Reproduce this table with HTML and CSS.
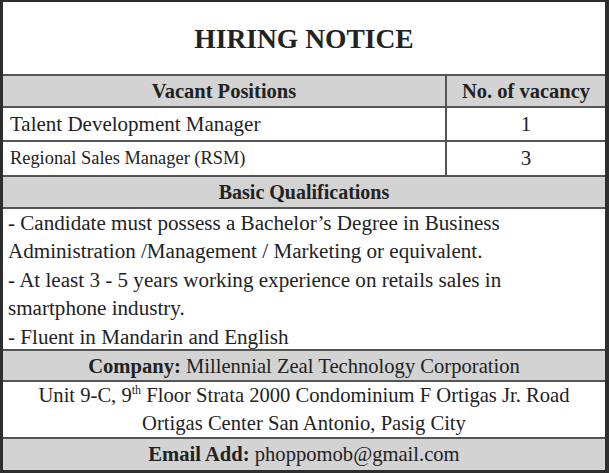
FILE: index.html
```html
<!DOCTYPE html>
<html lang="en">
<head>
<meta charset="utf-8">
<title>Hiring Notice</title>
<link rel="stylesheet" href="styles.css">
</head>
<body>
<div class="notice">
  <div class="row title">HIRING NOTICE</div>
  <div class="row split head shade">
    <div class="cell c1 bold">Vacant Positions</div>
    <div class="cell c2 bold">No. of vacancy</div>
  </div>
  <div class="row split r1">
    <div class="cell c1 left">Talent Development Manager</div>
    <div class="cell c2">1</div>
  </div>
  <div class="row split r2">
    <div class="cell c1 left small">Regional Sales Manager (RSM)</div>
    <div class="cell c2">3</div>
  </div>
  <div class="row qhead shade bold">Basic Qualifications</div>
  <div class="row quals">
    <p>- Candidate must possess a Bachelor’s Degree in Business</p>
    <p>Administration /Management / Marketing or equivalent.</p>
    <p>- At least 3 - 5 years working experience on retails sales in</p>
    <p>smartphone industry.</p>
    <p>- Fluent in Mandarin and English</p>
  </div>
  <div class="row company shade"><span class="bold">Company:</span>&nbsp;Millennial Zeal Technology Corporation</div>
  <div class="row address">
    <p>Unit 9-C, 9<sup>th</sup> Floor Strata 2000 Condominium F Ortigas Jr. Road</p>
    <p>Ortigas Center San Antonio, Pasig City</p>
  </div>
  <div class="row email shade"><span class="bold">Email Add:</span>&nbsp;phoppomob@gmail.com</div>
</div>
</body>
</html>
```

FILE: styles.css
```css
* { box-sizing: border-box; }
html, body { margin: 0; padding: 0; background: #ffffff; }
body {
  font-family: "Liberation Serif", "Times New Roman", serif;
  color: #222222;
}
.notice {
  width: 609px;
  height: 473px;
  border-style: solid;
  border-color: #2e2e2e;
  border-width: 2px 4px 3px 3px;
  display: flex;
  flex-direction: column;
  background: #fff;
}
.row {
  border-bottom: 2px solid #555555;
  display: flex;
  align-items: center;
  justify-content: center;
  font-size: 20.6px;
  flex: none;
}
.row:last-child { border-bottom: 0; }
.shade { background: #d3d3d3; }
.bold { font-weight: bold; }
.title {
  height: 74px;
  font-size: 27.5px;
  font-weight: bold;
  padding-top: 1px;
}
.split { align-items: stretch; justify-content: flex-start; }
.cell {
  display: flex;
  align-items: center;
  justify-content: center;
}
.c1 { width: 444px; border-right: 2px solid #555555; }
.c2 { flex: 1; font-size: 21px; }
.left { justify-content: flex-start; padding-left: 7px; font-size: 21px; }
.head { height: 32px; font-size: 20.5px; }
.head .c2 { font-size: 20.5px; }
.r1 { height: 34px; }
.r2 { height: 35px; }
.small { font-size: 18.4px; }
.qhead { height: 32px; font-size: 20px; }
.quals {
  height: 142px;
  flex-direction: column;
  align-items: flex-start;
  justify-content: flex-start;
  padding-left: 5px;
  font-size: 21.1px;
  line-height: 28.4px;
}
.quals p, .address p { margin: 0; }
.company { height: 31px; padding-top: 1px; }
.address {
  height: 57px;
  flex-direction: column;
  line-height: 28px;
  padding-bottom: 1px;
}
.address sup { font-size: 12px; vertical-align: 8px; line-height: 0; }
.email { flex: 1; height: auto; font-size: 20.6px; }
```
